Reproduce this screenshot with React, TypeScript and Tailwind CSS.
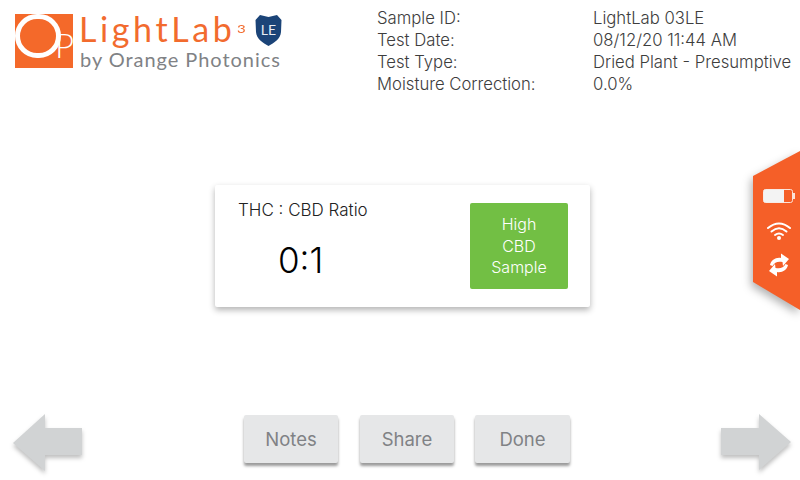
import React from 'react';

const details = [
  ['Sample ID:', 'LightLab 03LE'],
  ['Test Date:', '08/12/20 11:44 AM'],
  ['Test Type:', 'Dried Plant - Presumptive'],
  ['Moisture Correction:', '0.0%'],
];

const Logo: React.FC = () => (
  <div className="flex">
    <div className="relative w-[58px] h-[54px] bg-[#f4692a]">
      <div className="absolute left-0 top-0 w-[46px] h-[44px] rounded-full border-[5px] border-white" />
      <span className="absolute left-[40px] top-[11px] text-white text-[33px] leading-[40px] font-light font-['Lato',sans-serif]">P</span>
    </div>
    <div className="ml-[6px] w-[210px]">
      <div className="relative h-[32px] text-[#f26b2e] font-['Lato',sans-serif]">
        <span className="absolute left-0 top-[-5px] text-[34px] leading-[40px] tracking-[3.6px]">LightLab</span>
        <span className="absolute left-[158px] top-[8px] text-[12px] leading-[14px] origin-left scale-x-125">3</span>
        <svg className="absolute left-[176px] top-[1px]" width="27" height="31" viewBox="0 0 27 31">
          <path d="M5 0 L13.5 2 L22 0 L26.5 5 L26 17 C25.5 24 19 28 13.5 31 C8 28 1.500 24 1 17 L0.500 5 Z" fill="#1b4478" />
          <text x="13.5" y="20" textAnchor="middle" fontSize="14" fontWeight="400" fill="#e8edf3" fontFamily="Lato, sans-serif">LE</text>
        </svg>
      </div>
      <div className="text-[#808285] text-[20px] leading-[22px] mt-[2px] ml-[1px] tracking-[0.95px] font-['Lato',sans-serif] whitespace-nowrap">by Orange Photonics</div>
    </div>
  </div>
);

const NavArrow: React.FC<{ direction: 'left' | 'right' }> = ({ direction }) => (
  <svg className="drop-shadow-[0_3px_2px_rgba(0,0,0,0.25)]" width="70" height="58" viewBox="0 0 70 58">
    {direction === 'left' ? (
      <path d="M0 29 L32 0 V14 H69 V41 H32 V57 Z" fill="#d1d3d4" />
    ) : (
      <path d="M70 28 L38 0 V14 H0 V41 H38 V56 Z" fill="#d1d3d4" />
    )}
  </svg>
);

const ActionButton: React.FC<{ label: string; width: string }> = ({ label, width }) => (
  <button className={`h-[48px] ${width} pt-[1px] rounded-[2px] bg-[#e6e7e8] text-[#808285] text-[18.5px] shadow-[0_3px_3px_rgba(0,0,0,0.4)]`}>
    {label}
  </button>
);

const WifiIcon: React.FC = () => (
  <svg className="mt-[19px]" width="24" height="18" viewBox="0 0 24 18" fill="none" stroke="#fff" strokeWidth="2" strokeLinecap="round">
    <path d="M1 6 Q12 -3 23 6" />
    <path d="M4.500 9.500 Q12 3 19.500 9.500" />
    <path d="M8 13 Q12 10 16 13" />
    <circle cx="12" cy="16" r="2" fill="#fff" stroke="none" />
  </svg>
);

const SyncIcon: React.FC = () => (
  <svg className="mt-[13px]" width="20" height="24" viewBox="0 0 20 24" fill="#fff">
    <path d="M1 12 C2 7 7 4 12 5 L12 0.500 L20 6 L14 13 L13.500 9 C9 8 5.500 9 3.500 13 Z" />
    <path d="M1 12 C2 7 7 4 12 5 L12 0.500 L20 6 L14 13 L13.500 9 C9 8 5.500 9 3.500 13 Z" transform="rotate(180 10 12)" />
  </svg>
);

export default function App() {
  return (
    <div className="relative flex flex-col w-[800px] h-[480px] overflow-hidden bg-white font-['Inter',sans-serif]">
      {/* Header */}
      <header className="flex h-[96px] pl-[15px] pt-[14px]">
        <Logo />
        <div className="absolute left-[377px] top-[7px] grid grid-cols-[216px_auto] text-[16.7px] leading-[22px] font-light text-[#3d3d3d] whitespace-nowrap">
          {details.map(([label, value]) => (
            <React.Fragment key={label}>
              <span>{label}</span>
              <span>{value}</span>
            </React.Fragment>
          ))}
        </div>
      </header>

      {/* Result card */}
      <main className="flex-1 pt-[89px]">
        <div className="flex justify-between ml-[215px] w-[375px] h-[122px] pl-[23px] pr-[22px] pt-[18px] rounded-[2px] bg-white shadow-[0_3px_6px_rgba(0,0,0,0.3)]">
          <div>
            <div className="text-[17px] leading-[14px] font-light text-[#222] whitespace-nowrap">THC : CBD Ratio</div>
            <div className="mt-[22px] ml-[40px] text-[35px] leading-[42px] font-light text-black">0:1</div>
          </div>
          <div className="flex items-center justify-center w-[98px] h-[86px] pt-[1px] rounded-[2px] bg-[#72bf44] text-white text-[16px] leading-[21.5px] font-light text-center">
            High<br />CBD<br />Sample
          </div>
        </div>
      </main>

      {/* Bottom nav */}
      <footer className="flex items-start h-[66px] pl-[13px]">
        <NavArrow direction="left" />
        <div className="flex ml-[161px] mt-[1px]">
          <ActionButton label="Notes" width="w-[94px]" />
          <div className="w-[22px]" />
          <ActionButton label="Share" width="w-[94px]" />
          <div className="w-[21px]" />
          <ActionButton label="Done" width="w-[95px]" />
        </div>
        <div className="ml-[151px]">
          <NavArrow direction="right" />
        </div>
      </footer>

      {/* Status tab */}
      <div className="absolute right-0 top-[151px] drop-shadow-[-2px_4px_4px_rgba(0,0,0,0.3)]">
        <div className="flex flex-col items-center w-[47px] h-[159px] pt-[38px] pl-[4px] bg-[#f55f28] [clip-path:polygon(0_25px,100%_0,100%_100%,0_131px)]">
          <svg width="32" height="14" viewBox="0 0 32 14">
            <rect x="0.500" y="0.500" width="29" height="13" rx="2" fill="none" stroke="#fbe3d8" />
            <path d="M2 0.500 H21 V13.500 H2 A2 2 0 0 1 0.500 12 V2 A2 2 0 0 1 2 0.500 Z" fill="#f3f3f3" />
            <rect x="30" y="4" width="2" height="6" fill="#fbe3d8" />
          </svg>
          <WifiIcon />
          <SyncIcon />
        </div>
      </div>
    </div>
  );
}
